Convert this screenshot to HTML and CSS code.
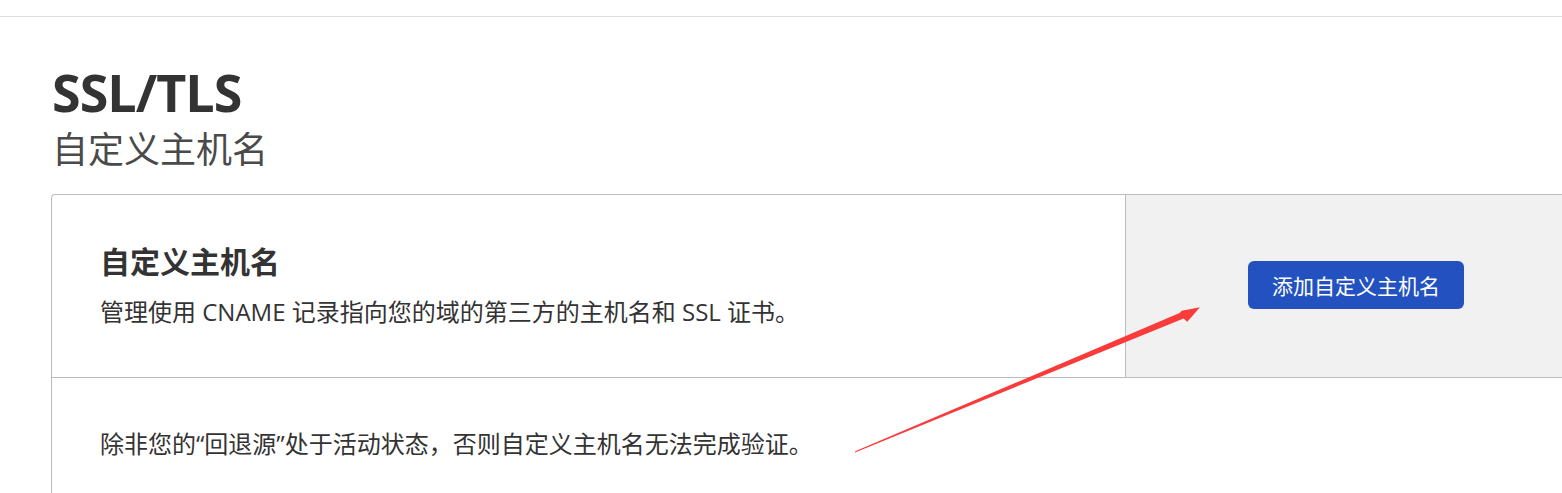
FILE: index.html
```html
<!DOCTYPE html>
<html lang="zh-CN">
<head>
<meta charset="utf-8">
<title>SSL/TLS - 自定义主机名</title>
<link rel="stylesheet" href="styles.css">
</head>
<body>
<div class="topbar"></div>
<main class="page">
  <header class="page-header">
    <h1 class="page-title">SSL/TLS</h1>
    <div class="page-subtitle">自定义主机名</div>
  </header>
  <section class="card">
    <div class="card-row">
      <div class="card-main">
        <h2 class="card-title">自定义主机名</h2>
        <p class="card-desc">管理使用 CNAME 记录指向您的域的第三方的主机名和 SSL 证书。</p>
      </div>
      <div class="card-side">
        <button class="btn-primary" type="button">添加自定义主机名</button>
      </div>
    </div>
    <div class="card-body">
      <p class="card-note">除非您的“回退源”处于活动状态，否则自定义主机名无法完成验证。</p>
    </div>
  </section>
</main>
<svg class="annot-arrow" width="1562" height="493" viewBox="0 0 1562 493">
  <polygon points="855,452.6 1183.6,318.4 1187.3,321.7 1200,307.2 1181.7,310.7 1179.6,313 855.2,451.2" fill="#fb3a3a"/>
</svg>
</body>
</html>
```
FILE: styles.css
```css
html, body {
  margin: 0;
  padding: 0;
}
body {
  width: 1562px;
  height: 493px;
  overflow: hidden;
  background: #fff;
  color: #333;
  font-family: "Open Sans", "Noto Sans CJK SC", sans-serif;
  position: relative;
}
.topbar {
  height: 16px;
  border-bottom: 1px solid #dedede;
}
.page {
  padding-left: 51px;
  width: 1535px;
}
.page-header {
  padding-top: 48px;
  padding-left: 1px;
}
.page-title {
  margin: 0;
  font-size: 52px;
  line-height: 54px;
  font-weight: 700;
  color: #333;
  letter-spacing: -1px;
}
.page-subtitle {
  font-size: 36px;
  line-height: 46px;
  color: #4a4a4a;
  margin-top: 8px;
}
.card {
  margin-top: 21px;
  border: 1px solid #bcbcbc;
  border-right: none;
  border-radius: 4px 0 0 0;
  background: #fff;
}
.card-row {
  display: flex;
  height: 182px;
  border-bottom: 1px solid #bcbcbc;
}
.card-main {
  box-sizing: border-box;
  width: 1074px;
  padding: 0 48px;
  display: flex;
  flex-direction: column;
  justify-content: center;
  border-right: 1px solid #bcbcbc;
}
.card-title {
  margin: 0;
  font-size: 30px;
  line-height: 40px;
  font-weight: 700;
  color: #333;
}
.card-desc {
  margin: 12px 0 0;
  font-size: 24px;
  line-height: 36px;
  color: #333;
}
.card-side {
  flex: 1;
  background: #f1f1f1;
  display: flex;
  align-items: center;
  justify-content: center;
  padding-bottom: 2px;
}
.btn-primary {
  font-family: "Noto Sans CJK SC", sans-serif;
  font-size: 21px;
  line-height: 48px;
  height: 48px;
  padding: 0 24px;
  border: none;
  border-radius: 6px;
  background: #2352c0;
  color: #fff;
}
.card-body {
  padding: 48px 48px 60px;
}
.card-note {
  margin: 0;
  font-size: 24px;
  line-height: 36px;
  color: #333;
}
.annot-arrow {
  position: absolute;
  left: 0;
  top: 0;
  pointer-events: none;
}
```
